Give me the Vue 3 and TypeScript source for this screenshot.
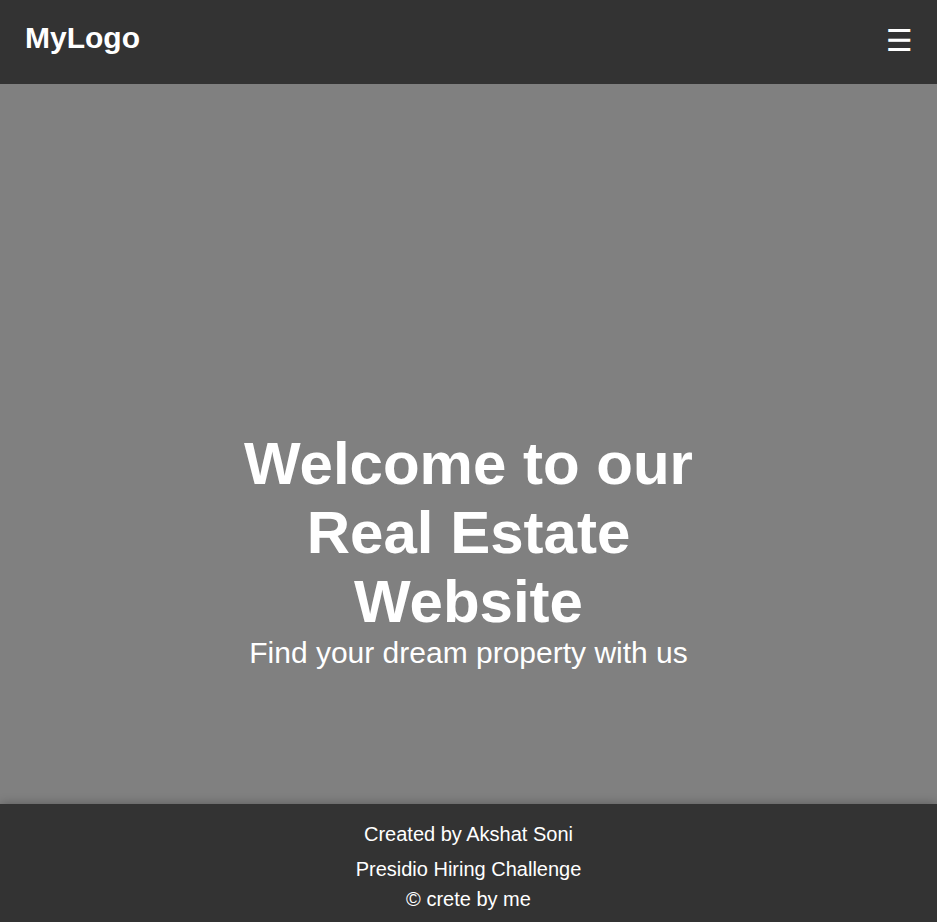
<script setup lang="ts">
import { ref } from 'vue'

const menuOpen = ref(false)
const credits: string[] = ['Created by Akshat Soni', 'Presidio Hiring Challenge']
</script>

<template>
  <div class="page">
    <header class="navbar">
      <a class="logo" href="#">MyLogo</a>
      <button class="toggle" type="button" :aria-expanded="menuOpen" @click="menuOpen = !menuOpen">☰</button>
    </header>
    <main class="hero">
      <div class="hero-text">
        <h1>Welcome to our Real Estate Website</h1>
        <p>Find your dream property with us</p>
      </div>
    </main>
    <footer class="footer">
      <p v-for="line in credits" :key="line" class="credit">{{ line }}</p>
      <p class="copyright">© crete by me</p>
    </footer>
  </div>
</template>

<style>
body {
  margin: 0;
  background: #808080;
}
</style>

<style scoped>
.page {
  display: flex;
  flex-direction: column;
  min-height: 100vh;
  font-family: "Liberation Sans", Arial, sans-serif;
  color: #fff;
}
.navbar {
  display: flex;
  justify-content: space-between;
  align-items: center;
  padding: 20px 24px 20px 25px;
  background: #333;
}
.logo {
  padding-bottom: 8px;
  color: #fff;
  font-size: 30px;
  font-weight: bold;
  line-height: 36px;
  text-decoration: none;
}
.toggle {
  padding: 0 0 2px;
  border: 0;
  background: none;
  color: #fff;
  font-family: "DejaVu Sans", sans-serif;
  font-size: 30px;
  line-height: 36px;
  cursor: pointer;
}
.hero {
  display: flex;
  flex: 1;
  flex-direction: column;
  justify-content: flex-end;
  align-items: center;
  padding-bottom: 134px;
  background: #808080;
}
.hero-text {
  width: 50%;
  text-align: center;
}
h1 {
  margin: 0;
  font-size: 60px;
  line-height: 69px;
}
.hero p {
  margin: 0;
  font-size: 30px;
  line-height: 34px;
}
.footer {
  position: relative;
  padding: 15px 20px 8px;
  background: #333;
  box-shadow: 0 0 10px rgba(0, 0, 0, 0.3);
  font-size: 20px;
  line-height: 30px;
  text-align: center;
}
.footer p {
  margin: 0;
}
.credit + .credit {
  margin-top: 5px;
}
</style>
